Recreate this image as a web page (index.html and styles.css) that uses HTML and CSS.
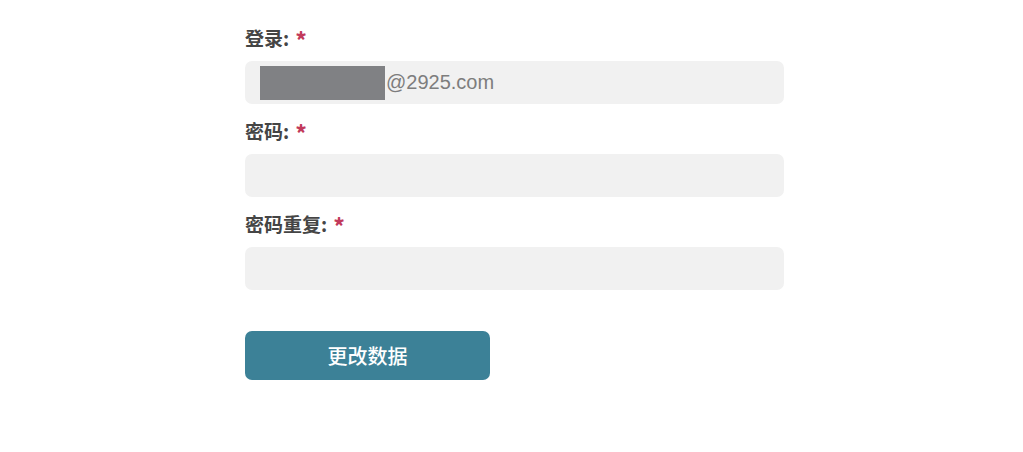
FILE: index.html
```html
<!DOCTYPE html>
<html lang="zh">
<head>
<meta charset="utf-8">
<title>更改数据</title>
<link rel="stylesheet" href="styles.css">
</head>
<body>
<form class="profile-form">
  <div class="field">
    <label class="field-label">登录: <span class="req">*</span></label>
    <div class="field-input"><span class="redact"></span><span class="email">@2925.com</span></div>
  </div>
  <div class="field">
    <label class="field-label">密码: <span class="req">*</span></label>
    <div class="field-input"></div>
  </div>
  <div class="field">
    <label class="field-label">密码重复: <span class="req">*</span></label>
    <div class="field-input"></div>
  </div>
  <button type="button" class="submit-btn">更改数据</button>
</form>
</body>
</html>
```
FILE: styles.css
```css
html, body {
  margin: 0;
  padding: 0;
  background: #ffffff;
}
body {
  font-family: "Noto Sans CJK SC", "Noto Sans", sans-serif;
}
.profile-form {
  width: 539px;
  margin-left: 245px;
  padding-top: 25px;
  display: flex;
  flex-direction: column;
}
.field {
  display: flex;
  flex-direction: column;
  margin-bottom: 14px;
}
.field-label {
  font-size: 19px;
  line-height: 26px;
  height: 26px;
  font-weight: 700;
  color: #454545;
  margin-bottom: 10px;
}
.req {
  color: #c23a5c;
  font-size: 21px;
  line-height: 0;
  font-weight: 900;
  margin-left: 2px;
  vertical-align: -2px;
}
.field-input {
  height: 43px;
  box-sizing: border-box;
  background: #f1f1f1;
  border-radius: 7px;
  padding-left: 15px;
  display: flex;
  align-items: center;
}
.redact {
  width: 125px;
  height: 34px;
  background: #808184;
  flex: none;
}
.email {
  font-family: "Liberation Sans", Arial, sans-serif;
  font-size: 20px;
  color: #7d7d7d;
  margin-left: 1px;
}
.submit-btn {
  margin-top: 27px;
  width: 245px;
  height: 49px;
  border: none;
  border-radius: 7px;
  background: #3c8197;
  color: #ffffff;
  font-family: "Noto Sans CJK SC", "Noto Sans", sans-serif;
  font-size: 20px;
  font-weight: 500;
  padding: 0;
}
```
